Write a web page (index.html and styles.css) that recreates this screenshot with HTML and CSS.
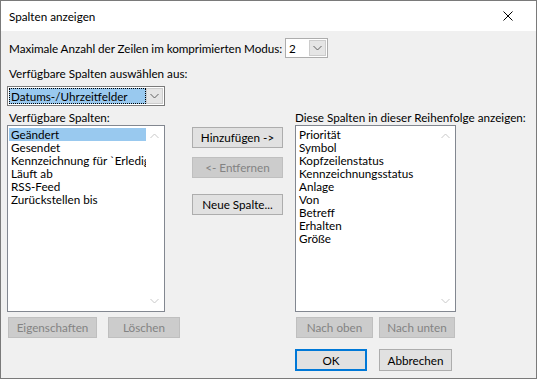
FILE: index.html
```html
<!DOCTYPE html>
<html lang="de">
<head>
<meta charset="utf-8">
<title>Spalten anzeigen</title>
<link rel="stylesheet" href="styles.css">
</head>
<body>
<div class="window">
  <div class="titlebar">
    <span class="title">Spalten anzeigen</span>
    <span class="close">
      <svg width="10" height="10" viewBox="0 0 10 10"><path d="M0.5 0.5 L9.5 9.5 M9.5 0.5 L0.5 9.5" stroke="#000" stroke-width="1" fill="none"/></svg>
    </span>
  </div>
  <div class="content">
    <div class="row-max">
      <span class="lbl lbl-max">Maximale Anzahl der Zeilen im komprimierten Modus:</span>
      <div class="combo combo-small">
        <span class="combo-text">2</span>
        <span class="drop"><svg width="9" height="6" viewBox="0 0 9 6"><path d="M0.5 1 L4.5 5 L8.5 1" stroke="#606060" fill="none"/></svg></span>
      </div>
    </div>
    <div class="lbl lbl-src">Verfügbare Spalten auswählen aus:</div>
    <div class="combo combo-src">
      <span class="combo-text sel">Datums-/Uhrzeitfelder</span>
      <span class="drop"><svg width="9" height="6" viewBox="0 0 9 6"><path d="M0.5 1 L4.5 5 L8.5 1" stroke="#606060" fill="none"/></svg></span>
    </div>
    <div class="lists">
      <div class="col col-left">
        <div class="lbl lbl-list">Verfügbare Spalten:</div>
        <div class="listbox">
          <ul class="items">
            <li class="selected">Geändert</li>
            <li>Gesendet</li>
            <li>Kennzeichnung für `Erledigt bis`</li>
            <li>Läuft ab</li>
            <li>RSS-Feed</li>
            <li>Zurückstellen bis</li>
          </ul>
          <div class="scroll">
            <svg width="9" height="6" viewBox="0 0 9 6"><path d="M0.5 5 L4.5 1 L8.5 5" stroke="#c8c8c8" fill="none"/></svg>
            <svg width="9" height="6" viewBox="0 0 9 6"><path d="M0.5 1 L4.5 5 L8.5 1" stroke="#c8c8c8" fill="none"/></svg>
          </div>
        </div>
      </div>
      <div class="col col-mid">
        <button class="btn btn-mid">Hinzufügen -&gt;</button>
        <button class="btn btn-mid disabled">&lt;- Entfernen</button>
        <button class="btn btn-mid btn-new">Neue Spalte...</button>
      </div>
      <div class="col col-right">
        <div class="lbl lbl-list lbl-right">Diese Spalten in dieser Reihenfolge anzeigen:</div>
        <div class="listbox listbox-right">
          <ul class="items">
            <li>Priorität</li>
            <li>Symbol</li>
            <li>Kopfzeilenstatus</li>
            <li>Kennzeichnungsstatus</li>
            <li>Anlage</li>
            <li>Von</li>
            <li>Betreff</li>
            <li>Erhalten</li>
            <li>Größe</li>
          </ul>
          <div class="scroll">
            <svg width="9" height="6" viewBox="0 0 9 6"><path d="M0.5 5 L4.5 1 L8.5 5" stroke="#c8c8c8" fill="none"/></svg>
            <svg width="9" height="6" viewBox="0 0 9 6"><path d="M0.5 1 L4.5 5 L8.5 1" stroke="#c8c8c8" fill="none"/></svg>
          </div>
        </div>
      </div>
    </div>
    <div class="row-actions">
      <button class="btn disabled btn-props">Eigenschaften</button>
      <button class="btn disabled btn-del">Löschen</button>
      <button class="btn disabled btn-up">Nach oben</button>
      <button class="btn disabled btn-down">Nach unten</button>
    </div>
    <div class="row-dialog">
      <button class="btn btn-ok">OK</button>
      <button class="btn btn-cancel">Abbrechen</button>
    </div>
  </div>
</div>
</body>
</html>
```

FILE: styles.css
```css
* { box-sizing: border-box; }
html, body { margin: 0; padding: 0; }
body {
  width: 537px;
  height: 379px;
  overflow: hidden;
  font-family: "Lato", "Noto Sans", sans-serif;
  font-size: 11.7px;
  color: #000;
  background: #f0f0f0;
}
.window {
  width: 537px;
  height: 379px;
  border: 1px solid #7a7a7a;
  background: #f0f0f0;
  display: flex;
  flex-direction: column;
}
.titlebar {
  height: 30px;
  background: #fff;
  display: flex;
  align-items: center;
  justify-content: space-between;
  padding: 0 23px 0 8px;
  flex: none;
}
.title { font-size: 11.7px; line-height: 16px; }
.close { display: flex; width: 10px; height: 10px; }
.content {
  padding: 7px 0 0 6px;
  flex: 1;
}
.lbl { line-height: 16px; white-space: nowrap; }
.row-max { display: flex; align-items: center; height: 20px; }
.lbl-max { width: 278px; padding-left: 2px; letter-spacing: -0.05px; }
.combo {
  display: flex;
  align-items: stretch;
  background: #fff;
  border: 1px solid #adadad;
  height: 20px;
  padding: 1px;
}
.combo-small { width: 43px; }
.combo-text { flex: 1; line-height: 16px; padding-left: 2px; }
.drop {
  width: 17px;
  flex: none;
  display: flex;
  align-items: center;
  justify-content: center;
  background: #e5e5e5;
  border: 1px solid #cccccc;
}
.lbl-src { margin-top: 7px; padding-left: 2px; }
.combo-src { width: 158px; margin-top: 5px; border-color: #7a7a7a; }
.combo-text.sel {
  background: #99c9ef;
  outline: 1px dotted #000;
  outline-offset: -1px;
  padding-left: 2px;
}
.lists { display: flex; margin-top: 3px; }
.col { display: flex; flex-direction: column; }
.col-left { width: 158px; }
.col-mid { width: 91px; margin-left: 27px; padding-top: 18px; }
.col-right { width: 161px; margin-left: 12px; }
.lbl-list { padding-left: 2px; }
.lbl-right { padding-left: 0; }
.listbox {
  height: 187px;
  border: 1px solid #828790;
  background: #fff;
  display: flex;
  padding: 1px;
}
.items {
  list-style: none;
  margin: 0;
  padding: 1px 0 0 0;
  flex: 1;
  overflow: hidden;
}
.items li {
  line-height: 13px;
  height: 13px;
  padding-left: 2px;
  white-space: nowrap;
  overflow: hidden;
}
.items li.selected { background: #99c9ef; }
.scroll {
  width: 17px;
  flex: none;
  display: flex;
  flex-direction: column;
  justify-content: space-between;
  align-items: center;
  padding: 6px 0 6px 0;
  background: #fff;
}
.btn {
  font-family: inherit;
  font-size: 11.7px;
  color: #000;
  background: #e1e1e1;
  border: 1px solid #adadad;
  height: 21px;
  padding: 0;
  margin: 0;
  line-height: 17px;
  white-space: nowrap;
}
.btn.disabled {
  background: #cccccc;
  border-color: #bfbfbf;
  color: #838383;
}
.btn-mid { width: 91px; }
.btn-mid + .btn-mid { margin-top: 9px; }
.btn-mid.btn-new { margin-top: 16px; }
.row-actions { display: flex; margin-top: 5px; }
.btn-props { width: 89px; margin-left: 1px; }
.btn-del { width: 72px; margin-left: 11px; }
.btn-up { width: 77px; margin-left: 116px; }
.btn-down { width: 76px; margin-left: 6px; }
.row-dialog { display: flex; margin-top: 11px; padding-left: 288px; }
.btn-ok { width: 72px; height: 22px; border: 2px solid #0078d7; }
.btn-cancel { width: 73px; height: 22px; margin-left: 12px; }
```
